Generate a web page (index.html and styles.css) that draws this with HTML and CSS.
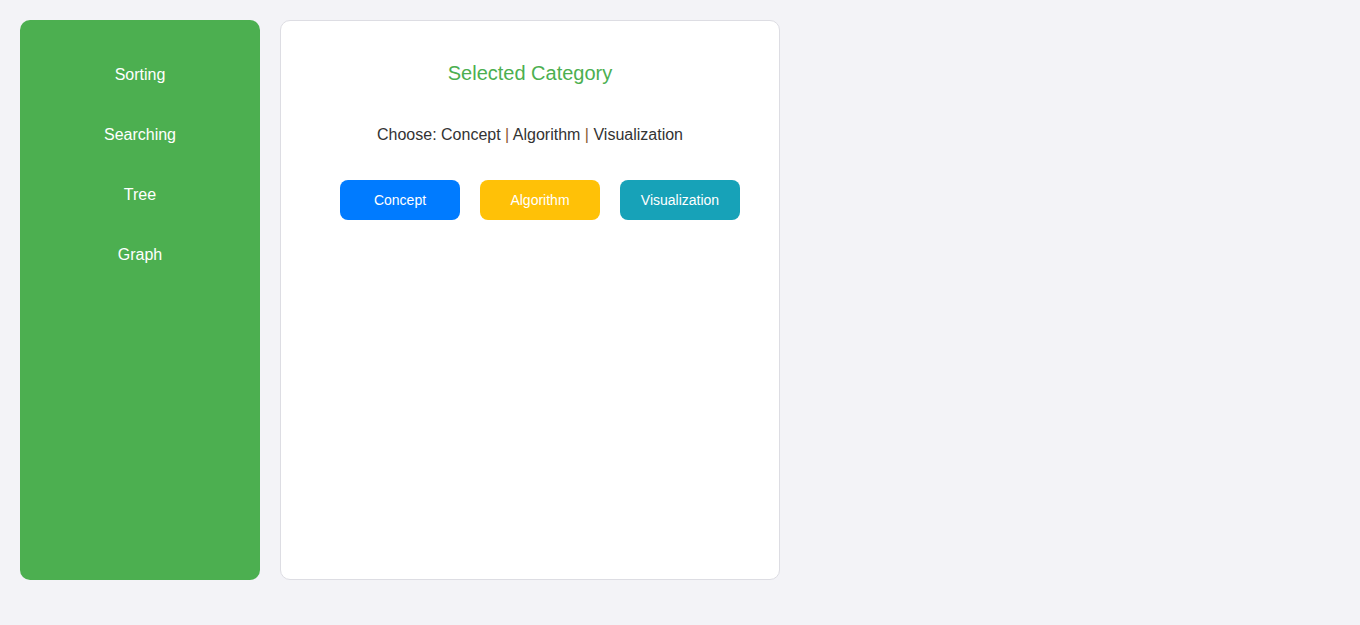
FILE: index.html
```html
<!DOCTYPE html>
<html>
<head>
<meta charset="utf-8">
<link rel="stylesheet" href="styles.css">
</head>
<body>
<div class="layout">
  <nav class="sidebar">
    <div class="nav-item">Sorting</div>
    <div class="nav-item">Searching</div>
    <div class="nav-item">Tree</div>
    <div class="nav-item">Graph</div>
  </nav>
  <main class="panel">
    <h2 class="title">Selected Category</h2>
    <p class="choose">Choose: Concept <span class="sep">|</span> Algorithm <span class="sep">|</span> Visualization</p>
    <div class="buttons">
      <button class="btn btn-concept">Concept</button>
      <button class="btn btn-algo">Algorithm</button>
      <button class="btn btn-vis">Visualization</button>
    </div>
  </main>
</div>
</body>
</html>
```
FILE: styles.css
```css
html, body {
  margin: 0;
  padding: 0;
}
body {
  background: #f3f3f7;
  font-family: "Liberation Sans", Arial, sans-serif;
  color: #333;
}
.layout {
  display: flex;
  gap: 20px;
  padding: 20px;
  align-items: flex-start;
}
.sidebar {
  width: 240px;
  height: 560px;
  box-sizing: border-box;
  background: #4caf50;
  border-radius: 10px;
  padding-top: 25px;
}
.nav-item {
  height: 60px;
  line-height: 60px;
  text-align: center;
  color: #fff;
  font-size: 16px;
}
.panel {
  width: 500px;
  height: 560px;
  box-sizing: border-box;
  background: #fff;
  border: 1px solid #dddde3;
  border-radius: 10px;
  padding: 41px 20px 20px;
  text-align: center;
}
.title {
  margin: 0;
  font-size: 20px;
  line-height: 23px;
  font-weight: normal;
  color: #4caf50;
}
.choose {
  margin: 41px 0 0;
  font-size: 16px;
  line-height: 18px;
  color: #333;
}
.sep {
  color: #8a5a30;
}
.buttons {
  display: flex;
  justify-content: center;
  margin-top: 36px;
}
.btn {
  width: 120px;
  height: 40px;
  margin-left: 20px;
  border: none;
  border-radius: 8px;
  color: #fff;
  font-family: "Liberation Sans", Arial, sans-serif;
  font-size: 14px;
  padding: 0;
}
.btn-concept { background: #007bff; }
.btn-algo { background: #ffc107; }
.btn-vis { background: #17a2b8; }
```
